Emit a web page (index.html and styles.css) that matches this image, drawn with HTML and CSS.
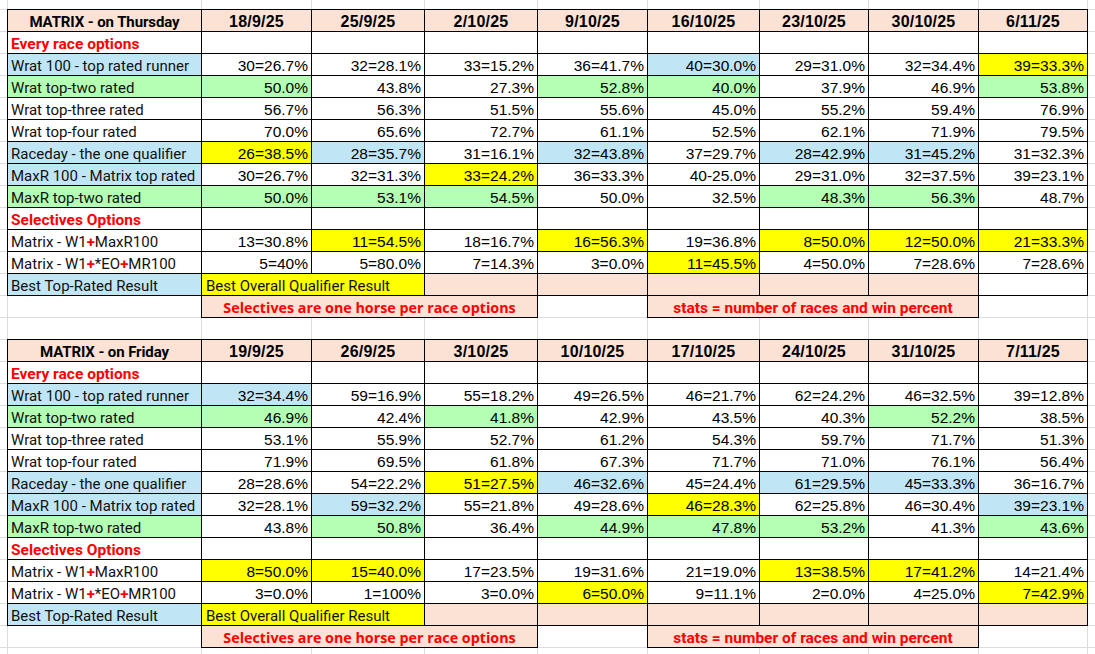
FILE: index.html
```html
<!DOCTYPE html>
<html lang="en">
<head>
<meta charset="utf-8">
<title>Matrix results</title>
<link rel="stylesheet" href="styles.css">
</head>
<body>
<main class="page">

<section class="sheet">
  <div class="c hd first title">MATRIX - on Thursday</div>
  <div class="c hd">18/9/25</div>
  <div class="c hd">25/9/25</div>
  <div class="c hd">2/10/25</div>
  <div class="c hd">9/10/25</div>
  <div class="c hd">16/10/25</div>
  <div class="c hd">23/10/25</div>
  <div class="c hd">30/10/25</div>
  <div class="c hd">6/11/25</div>

  <div class="c first lbl sec">Every race options</div>
  <div class="c"></div><div class="c"></div><div class="c"></div><div class="c"></div><div class="c"></div><div class="c"></div><div class="c"></div><div class="c"></div>

  <div class="c first lbl b">Wrat 100 - top rated runner</div>
  <div class="c num">30=26.7%</div><div class="c num">32=28.1%</div><div class="c num">33=15.2%</div><div class="c num">36=41.7%</div><div class="c num b">40=30.0%</div><div class="c num">29=31.0%</div><div class="c num">32=34.4%</div><div class="c num y">39=33.3%</div>

  <div class="c first lbl g">Wrat top-two rated</div>
  <div class="c num g">50.0%</div><div class="c num">43.8%</div><div class="c num">27.3%</div><div class="c num g">52.8%</div><div class="c num g">40.0%</div><div class="c num">37.9%</div><div class="c num">46.9%</div><div class="c num g">53.8%</div>

  <div class="c first lbl">Wrat top-three rated</div>
  <div class="c num">56.7%</div><div class="c num">56.3%</div><div class="c num">51.5%</div><div class="c num">55.6%</div><div class="c num">45.0%</div><div class="c num">55.2%</div><div class="c num">59.4%</div><div class="c num">76.9%</div>

  <div class="c first lbl">Wrat top-four rated</div>
  <div class="c num">70.0%</div><div class="c num">65.6%</div><div class="c num">72.7%</div><div class="c num">61.1%</div><div class="c num">52.5%</div><div class="c num">62.1%</div><div class="c num">71.9%</div><div class="c num">79.5%</div>

  <div class="c first lbl b">Raceday - the one qualifier</div>
  <div class="c num y">26=38.5%</div><div class="c num b">28=35.7%</div><div class="c num">31=16.1%</div><div class="c num b">32=43.8%</div><div class="c num">37=29.7%</div><div class="c num b">28=42.9%</div><div class="c num b">31=45.2%</div><div class="c num">31=32.3%</div>

  <div class="c first lbl b">MaxR 100 - Matrix top rated</div>
  <div class="c num">30=26.7%</div><div class="c num">32=31.3%</div><div class="c num y">33=24.2%</div><div class="c num">36=33.3%</div><div class="c num">40-25.0%</div><div class="c num">29=31.0%</div><div class="c num">32=37.5%</div><div class="c num">39=23.1%</div>

  <div class="c first lbl g">MaxR top-two rated</div>
  <div class="c num g">50.0%</div><div class="c num g">53.1%</div><div class="c num g">54.5%</div><div class="c num">50.0%</div><div class="c num">32.5%</div><div class="c num g">48.3%</div><div class="c num g">56.3%</div><div class="c num">48.7%</div>

  <div class="c first lbl sec">Selectives Options</div>
  <div class="c"></div><div class="c"></div><div class="c"></div><div class="c"></div><div class="c"></div><div class="c"></div><div class="c"></div><div class="c"></div>

  <div class="c first lbl">Matrix - W1<b class="plus">+</b>MaxR100</div>
  <div class="c num">13=30.8%</div><div class="c num y">11=54.5%</div><div class="c num">18=16.7%</div><div class="c num y">16=56.3%</div><div class="c num">19=36.8%</div><div class="c num y">8=50.0%</div><div class="c num y">12=50.0%</div><div class="c num y">21=33.3%</div>

  <div class="c first lbl">Matrix - W1<b class="plus">+</b>*EO<b class="plus">+</b>MR100</div>
  <div class="c num">5=40%</div><div class="c num">5=80.0%</div><div class="c num">7=14.3%</div><div class="c num">3=0.0%</div><div class="c num y">11=45.5%</div><div class="c num">4=50.0%</div><div class="c num">7=28.6%</div><div class="c num">7=28.6%</div>

  <div class="c first lbl b">Best Top-Rated Result</div>
  <div class="c lbl y span2 lead">Best Overall Qualifier Result</div>
  <div class="c p"></div><div class="c p"></div><div class="c p"></div><div class="c p"></div><div class="c p"></div><div class="c"></div>

  <div class="void"></div>
  <div class="c p span3 joined note-sel">Selectives are one horse per race options</div>
  <div class="void"></div>
  <div class="c p span3 joined note-stats">stats = number of races and win percent</div>
  <div class="void"></div>
</section>

<section class="sheet">
  <div class="c hd first title">MATRIX - on Friday</div>
  <div class="c hd">19/9/25</div>
  <div class="c hd">26/9/25</div>
  <div class="c hd">3/10/25</div>
  <div class="c hd">10/10/25</div>
  <div class="c hd">17/10/25</div>
  <div class="c hd">24/10/25</div>
  <div class="c hd">31/10/25</div>
  <div class="c hd">7/11/25</div>

  <div class="c first lbl sec">Every race options</div>
  <div class="c"></div><div class="c"></div><div class="c"></div><div class="c"></div><div class="c"></div><div class="c"></div><div class="c"></div><div class="c"></div>

  <div class="c first lbl b">Wrat 100 - top rated runner</div>
  <div class="c num b">32=34.4%</div><div class="c num">59=16.9%</div><div class="c num">55=18.2%</div><div class="c num">49=26.5%</div><div class="c num">46=21.7%</div><div class="c num">62=24.2%</div><div class="c num">46=32.5%</div><div class="c num">39=12.8%</div>

  <div class="c first lbl g">Wrat top-two rated</div>
  <div class="c num g">46.9%</div><div class="c num">42.4%</div><div class="c num g">41.8%</div><div class="c num">42.9%</div><div class="c num">43.5%</div><div class="c num">40.3%</div><div class="c num g">52.2%</div><div class="c num">38.5%</div>

  <div class="c first lbl">Wrat top-three rated</div>
  <div class="c num">53.1%</div><div class="c num">55.9%</div><div class="c num">52.7%</div><div class="c num">61.2%</div><div class="c num">54.3%</div><div class="c num">59.7%</div><div class="c num">71.7%</div><div class="c num">51.3%</div>

  <div class="c first lbl">Wrat top-four rated</div>
  <div class="c num">71.9%</div><div class="c num">69.5%</div><div class="c num">61.8%</div><div class="c num">67.3%</div><div class="c num">71.7%</div><div class="c num">71.0%</div><div class="c num">76.1%</div><div class="c num">56.4%</div>

  <div class="c first lbl b">Raceday - the one qualifier</div>
  <div class="c num">28=28.6%</div><div class="c num">54=22.2%</div><div class="c num y">51=27.5%</div><div class="c num b">46=32.6%</div><div class="c num">45=24.4%</div><div class="c num b">61=29.5%</div><div class="c num b">45=33.3%</div><div class="c num">36=16.7%</div>

  <div class="c first lbl b">MaxR 100 - Matrix top rated</div>
  <div class="c num">32=28.1%</div><div class="c num b">59=32.2%</div><div class="c num">55=21.8%</div><div class="c num">49=28.6%</div><div class="c num y">46=28.3%</div><div class="c num">62=25.8%</div><div class="c num">46=30.4%</div><div class="c num b">39=23.1%</div>

  <div class="c first lbl g">MaxR top-two rated</div>
  <div class="c num">43.8%</div><div class="c num g">50.8%</div><div class="c num">36.4%</div><div class="c num g">44.9%</div><div class="c num g">47.8%</div><div class="c num g">53.2%</div><div class="c num">41.3%</div><div class="c num g">43.6%</div>

  <div class="c first lbl sec">Selectives Options</div>
  <div class="c"></div><div class="c"></div><div class="c"></div><div class="c"></div><div class="c"></div><div class="c"></div><div class="c"></div><div class="c"></div>

  <div class="c first lbl">Matrix - W1<b class="plus">+</b>MaxR100</div>
  <div class="c num y">8=50.0%</div><div class="c num y">15=40.0%</div><div class="c num">17=23.5%</div><div class="c num">19=31.6%</div><div class="c num">21=19.0%</div><div class="c num y">13=38.5%</div><div class="c num y">17=41.2%</div><div class="c num">14=21.4%</div>

  <div class="c first lbl">Matrix - W1<b class="plus">+</b>*EO<b class="plus">+</b>MR100</div>
  <div class="c num">3=0.0%</div><div class="c num">1=100%</div><div class="c num">3=0.0%</div><div class="c num y">6=50.0%</div><div class="c num">9=11.1%</div><div class="c num">2=0.0%</div><div class="c num">4=25.0%</div><div class="c num y">7=42.9%</div>

  <div class="c first lbl b">Best Top-Rated Result</div>
  <div class="c lbl y span2 lead">Best Overall Qualifier Result</div>
  <div class="c p"></div><div class="c p"></div><div class="c p"></div><div class="c p"></div><div class="c p"></div><div class="c p"></div>

  <div class="void"></div>
  <div class="c p span3 joined note-sel">Selectives are one horse per race options</div>
  <div class="void"></div>
  <div class="c p span3 joined note-stats">stats = number of races and win percent</div>
  <div class="void"></div>
</section>

</main>
</body>
</html>
```

FILE: styles.css
```css
html {
  background-color: #ffffff;
  background-image:
    linear-gradient(#dcdcdc, #dcdcdc),
    linear-gradient(#dcdcdc, #dcdcdc),
    linear-gradient(#dcdcdc, #dcdcdc),
    linear-gradient(#dcdcdc, #dcdcdc),
    linear-gradient(#dcdcdc, #dcdcdc),
    linear-gradient(#dcdcdc, #dcdcdc),
    linear-gradient(#dcdcdc, #dcdcdc),
    linear-gradient(#dcdcdc, #dcdcdc),
    linear-gradient(#dcdcdc, #dcdcdc),
    linear-gradient(#dcdcdc, #dcdcdc),
    linear-gradient(to bottom, transparent 21px, #dcdcdc 21px);
  background-size:
    1px 100%, 1px 100%, 1px 100%, 1px 100%, 1px 100%,
    1px 100%, 1px 100%, 1px 100%, 1px 100%, 1px 100%,
    100% 22px;
  background-position:
    7px 0, 201px 0, 311px 0, 424px 0, 537px 0,
    647px 0, 759px 0, 868px 0, 978px 0, 1087px 0,
    0 10px;
  background-repeat:
    repeat-y, repeat-y, repeat-y, repeat-y, repeat-y,
    repeat-y, repeat-y, repeat-y, repeat-y, repeat-y,
    repeat-y;
  min-height: 100%;
}

body {
  margin: 0;
  color: #000;
}

.page {
  display: flex;
  flex-direction: column;
  gap: 21px;
  padding: 9px 0 0 7px;
}

.sheet {
  display: grid;
  grid-template-columns: 195px 110px 113px 113px 110px 112px 109px 110px 109px;
  grid-auto-rows: auto;
  width: 1081px;
}

.c {
  box-sizing: border-box;
  height: 22px;
  padding: 3px 3px 0 3px;
  line-height: 18px;
  border-right: 1px solid #000;
  border-bottom: 1px solid #000;
  background: #ffffff;
  white-space: nowrap;
  font-family: "Liberation Sans", Arial, sans-serif;
  font-size: 15.5px;
}

.first {
  border-left: 1px solid #000;
}

.hd {
  height: 23px;
  border-top: 1px solid #000;
  background: #fbe2d5;
  text-align: center;
  font-weight: bold;
  font-size: 16px;
  letter-spacing: 0.2px;
}

.title {
  font-family: Roboto, "Noto Sans", sans-serif;
  font-size: 15px;
  letter-spacing: -0.1px;
}

.lbl {
  font-family: Roboto, "Noto Sans", sans-serif;
  font-size: 15px;
  text-align: left;
  color: #111;
}

.sec {
  color: #ff0000;
  font-weight: bold;
  font-size: 15.5px;
}

.lead {
  padding-left: 4px;
}

.num {
  text-align: right;
}

.plus {
  color: #ff0000;
  font-weight: bold;
}

.b { background: #c0e6f5; }
.g { background: #b3ffb3; }
.y { background: #ffff00; }
.p { background: #fbe2d5; }

.span2 { grid-column: span 2; }
.span3 { grid-column: span 3; }

.joined {
  margin-left: -1px;
  border-left: 1px solid #000;
  text-align: center;
  color: #ff0000;
  font-weight: bold;
}

.note-sel {
  font-family: "Open Sans", "Noto Sans", sans-serif;
  font-size: 14.3px;
}

.note-stats {
  font-family: Roboto, "Noto Sans", sans-serif;
  font-size: 15.5px;
}

.void {
  height: 22px;
}
```
